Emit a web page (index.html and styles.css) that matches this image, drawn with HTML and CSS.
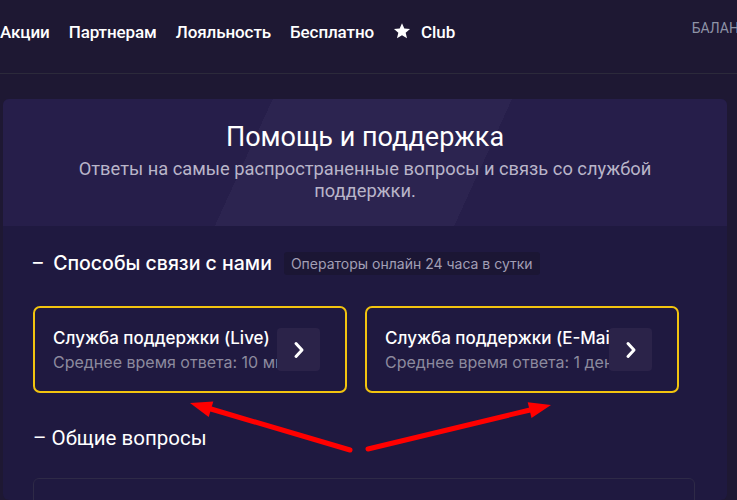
FILE: index.html
```html
<!DOCTYPE html>
<html lang="ru">
<head>
    <meta charset="UTF-8">
    <meta name="viewport" content="width=device-width, initial-scale=1.0">
    <title>Помощь и поддержка</title>
    <link rel="stylesheet" href="styles.css">
</head>
<body>
    <header class="top-bar">
        <nav class="menu">
            <a href="#" class="menu-link">Акции</a>
            <a href="#" class="menu-link">Партнерам</a>
            <a href="#" class="menu-link">Лояльность</a>
            <a href="#" class="menu-link">Бесплатно</a>
            <a href="#" class="menu-link">
                <svg class="star" viewBox="0 0 24 24" width="18" height="18"><path d="M12 1.5l3.1 7.1 7.6.7-5.8 5 1.8 7.5L12 17.8l-6.7 4 1.8-7.5-5.8-5 7.6-.7z" fill="#fff"/></svg>
                Club
            </a>
        </nav>
        <span class="balance">Баланс</span>
    </header>

    <main class="page">
        <section class="panel">
            <div class="hero">
                <h1 class="hero-title">Помощь и поддержка</h1>
                <p class="hero-text">Ответы на самые распространенные вопросы и связь со службой поддержки.</p>
            </div>

            <div class="panel-body">
                <div class="section-head">
                    <h2 class="section-title">–&nbsp; Способы связи с нами</h2>
                    <span class="badge">Операторы онлайн 24 часа в сутки</span>
                </div>

                <div class="contacts">
                    <a href="#" class="contact-card">
                        <div class="contact-info">
                            <p class="contact-name">Служба поддержки (Live)</p>
                            <p class="contact-time">Среднее время ответа: 10 минут</p>
                        </div>
                        <span class="contact-arrow">
                            <svg viewBox="0 0 20 20" width="20" height="20"><path d="M7 3.5l6 6.5-6 6.5" fill="none" stroke="#fff" stroke-width="3" stroke-linecap="round" stroke-linejoin="round"/></svg>
                        </span>
                    </a>
                    <a href="#" class="contact-card">
                        <div class="contact-info">
                            <p class="contact-name">Служба поддержки (E-Mail)</p>
                            <p class="contact-time">Среднее время ответа: 1 день</p>
                        </div>
                        <span class="contact-arrow">
                            <svg viewBox="0 0 20 20" width="20" height="20"><path d="M7 3.5l6 6.5-6 6.5" fill="none" stroke="#fff" stroke-width="3" stroke-linecap="round" stroke-linejoin="round"/></svg>
                        </span>
                    </a>
                </div>

                <h2 class="section-title faq-title">– Общие вопросы</h2>
                <div class="faq-box"></div>
            </div>
        </section>
    </main>

    <!-- annotation arrows drawn over the screenshot -->
    <svg class="marks" width="737" height="500" viewBox="0 0 737 500">
        <line x1="350" y1="450" x2="211" y2="409" stroke="#f00" stroke-width="5" stroke-linecap="round"/>
        <polygon points="190,403 213.3,401.5 208.7,416.9" fill="#f00"/>
        <line x1="368" y1="449" x2="530" y2="410" stroke="#f00" stroke-width="5" stroke-linecap="round"/>
        <polygon points="551,405 531.5,417.9 527.7,402.3" fill="#f00"/>
    </svg>
</body>
</html>
```

FILE: styles.css
```css
html,
body {
    height: 500px;
    overflow: hidden;
}
body {
    margin: 0;
    background-color: #1e1833;
    color: white;
    font-family: Roboto, "Noto Sans", sans-serif;
}
p,
h1,
h2 {
    margin: 0;
}
a {
    color: inherit;
    text-decoration: none;
}
.top-bar {
    height: 74px;
    border-bottom: 1px solid #2c2a3b;
    display: flex;
    justify-content: space-between;
    align-items: flex-start;
    padding-top: 22px;
    box-sizing: border-box;
}
.menu {
    display: flex;
    gap: 19px;
}
.menu-link {
    font-size: 17px;
    font-weight: 500;
    letter-spacing: -0.1px;
    line-height: 20px;
    display: flex;
    align-items: center;
    gap: 10px;
}
.star {
    margin-top: -2px;
}
.balance {
    color: #8e93a6;
    font-size: 14px;
    text-transform: uppercase;
    line-height: 14px;
    margin-top: -1px;
    margin-right: -11px;
}
.page {
    padding: 25px 10px 0 3px;
}
.panel {
    background-color: #1f1940;
    border-radius: 6px;
    height: 401px;
    overflow: hidden;
}
.hero {
    height: 127px;
    background-color: #261e4a;
    background-image: linear-gradient(114.5deg, transparent 34.5%, #2c2450 34.5%, #2c2450 65.1%, transparent 65.1%);
    text-align: center;
    padding-top: 21px;
    box-sizing: border-box;
}
.hero-title {
    font-size: 27px;
    font-weight: 400;
    line-height: 34px;
}
.hero-text {
    color: #b9b5c9;
    font-size: 18.3px;
    line-height: 22px;
    margin: 4px auto 0;
    width: 620px;
}
.panel-body {
    padding: 23px 33px 0 30px;
}
.section-head {
    display: flex;
    align-items: center;
    gap: 12px;
}
.section-title {
    font-family: Inter, "Noto Sans", sans-serif;
    font-size: 19.5px;
    font-weight: 500;
    line-height: 28px;
}
.badge {
    background-color: #1b1634;
    color: #a29fb5;
    font-family: Inter, "Noto Sans", sans-serif;
    font-size: 14px;
    padding: 3px 7px;
    border-radius: 3px;
}
.contacts {
    display: grid;
    grid-template-columns: 314px 314px;
    gap: 18px;
    margin-top: 29px;
}
.contact-card {
    height: 87px;
    border: 2px solid #f2c40f;
    border-radius: 7px;
    box-sizing: border-box;
    display: flex;
    align-items: center;
    justify-content: space-between;
    padding: 0 25px 0 18px;
    overflow: hidden;
}
.contact-info {
    font-family: Inter, "Noto Sans", sans-serif;
    white-space: nowrap;
    overflow: hidden;
    width: 224px;
}
.contact-name {
    font-size: 17px;
    font-weight: 500;
    line-height: 23px;
}
.contact-time {
    color: #8c8a9e;
    font-size: 16px;
    line-height: 22px;
    margin-top: 1px;
}
.contact-arrow {
    flex: none;
    width: 43px;
    height: 43px;
    border-radius: 4px;
    background-color: #2b2349;
    display: flex;
    align-items: center;
    justify-content: center;
}
.faq-title {
    font-family: Roboto, "Noto Sans", sans-serif;
    font-size: 20.5px;
    font-weight: 400;
    margin-top: 31px;
}
.faq-box {
    margin-top: 26px;
    height: 60px;
    border: 1px solid #2e2a47;
    border-radius: 6px;
    width: 660px;
}
.marks {
    position: absolute;
    left: 0;
    top: 0;
    pointer-events: none;
}
```
